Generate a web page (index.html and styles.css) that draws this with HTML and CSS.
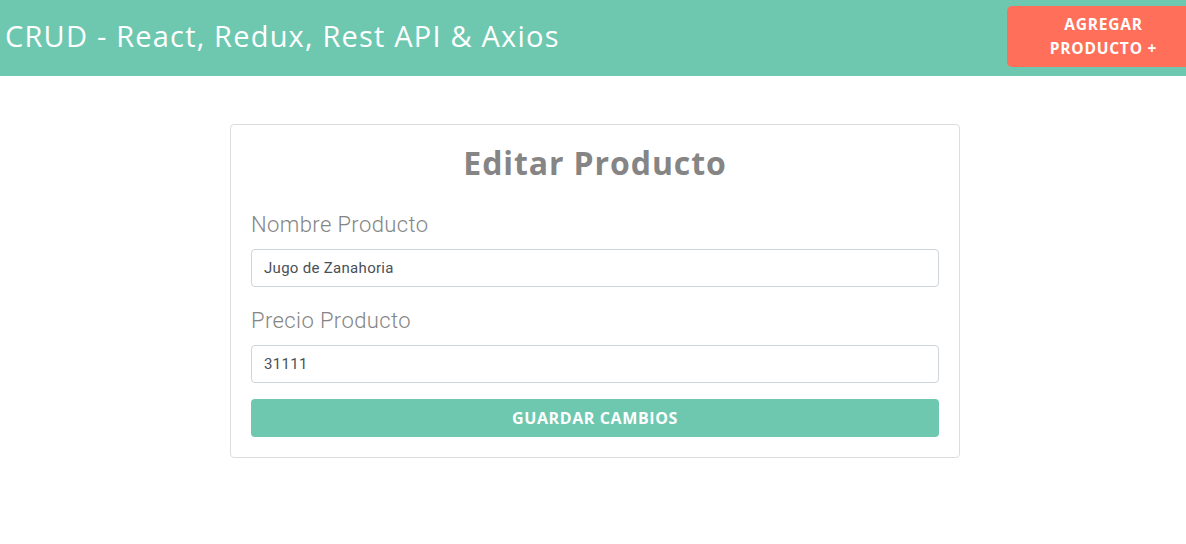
FILE: index.html
```html
<!DOCTYPE html>
<html lang="es">
<head>
<meta charset="utf-8">
<title>CRUD</title>
<link rel="stylesheet" href="styles.css">
</head>
<body>
<header class="navbar">
  <h1 class="brand">CRUD - React, Redux, Rest API &amp; Axios</h1>
  <a class="btn-add" href="#">AGREGAR<br>PRODUCTO +</a>
</header>
<main class="main">
  <div class="card">
    <h2 class="card-title">Editar Producto</h2>
    <form class="form">
      <div class="group">
        <label class="label">Nombre Producto</label>
        <input class="input" type="text" value="Jugo de Zanahoria">
      </div>
      <div class="group">
        <label class="label">Precio Producto</label>
        <input class="input" type="text" value="31111">
      </div>
      <button class="btn-save" type="button">GUARDAR CAMBIOS</button>
    </form>
  </div>
</main>
</body>
</html>
```

FILE: styles.css
```css
* { box-sizing: border-box; }
body {
  margin: 0;
  font-family: "Open Sans", "Liberation Sans", sans-serif;
  background: #fff;
}
.navbar {
  height: 76px;
  background: #6dc8af;
  display: flex;
  align-items: flex-start;
  justify-content: space-between;
}
.brand {
  margin: 0;
  padding: 18px 0 0 5px;
  font-family: "Open Sans", sans-serif;
  font-weight: 400;
  font-size: 29px;
  letter-spacing: 1.2px;
  line-height: 36px;
  color: #fff;
}
.btn-add {
  margin-top: 6px;
  width: 179px;
  height: 61px;
  background: #ff6f59;
  border-radius: 5px 0 0 5px;
  color: #fff;
  text-decoration: none;
  font-family: "Open Sans", sans-serif;
  font-weight: 700;
  font-size: 15.5px;
  letter-spacing: 0.8px;
  line-height: 24px;
  text-align: center;
  padding-top: 6px;
  padding-left: 14px;
}
.main {
  padding-top: 48px;
  display: flex;
  justify-content: center;
}
.card {
  width: 730px;
  margin-left: 4px;
  border: 1px solid #dcdcdc;
  border-radius: 4px;
  padding: 18px 20px 20px;
}
.card-title {
  margin: 0 0 28px;
  text-align: center;
  font-family: "Open Sans", sans-serif;
  font-weight: 700;
  font-size: 32px;
  letter-spacing: 0.9px;
  line-height: 40px;
  color: #858585;
}
.group { margin-bottom: 16px; }
.group + .group { padding-top: 4px; }
.label {
  display: block;
  font-family: "Roboto", sans-serif;
  font-weight: 300;
  font-size: 22px;
  letter-spacing: 0.4px;
  line-height: 28px;
  color: #858585;
  margin-bottom: 10px;
}
.input {
  display: block;
  width: 100%;
  height: 38px;
  border: 1px solid #ced4da;
  border-radius: 4px;
  padding: 0 12px;
  font-family: "Roboto", sans-serif;
  font-size: 15px;
  letter-spacing: 0.3px;
  color: #495057;
  background: #fff;
}
.btn-save {
  display: block;
  width: 100%;
  height: 38px;
  border: 0;
  border-radius: 4px;
  background: #6dc8af;
  color: #fff;
  font-family: "Open Sans", sans-serif;
  font-weight: 700;
  font-size: 16px;
  letter-spacing: 0.6px;
}
```
